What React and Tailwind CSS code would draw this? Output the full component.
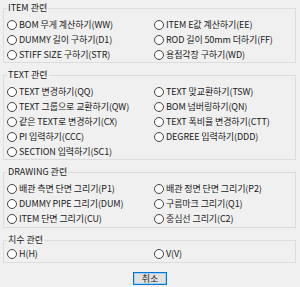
import React from "react";

const font = { fontFamily: '"Noto Sans CJK KR", "Noto Sans", sans-serif' };

function Radio({ label }) {
  return (
    <div className="flex items-center h-[15px] gap-[2px] whitespace-nowrap">
      <span className="w-[10px] h-[10px] rounded-full border border-[#444444] bg-white shrink-0" />
      <span className="leading-[15px] tracking-[-0.1px]">{label}</span>
    </div>
  );
}

function Group({ title, items, className = "", pt = "pt-[3px]", pb = "pb-0" }) {
  return (
    <fieldset className={`ml-[3px] w-[293px] border border-[#dcdcdc] ${className}`}>
      <legend className="ml-[3px] px-[1px] leading-[12px] text-[9px]">{title}</legend>
      <div className={`grid grid-cols-[147px_1fr] pl-[3px] ${pt} ${pb}`}>
        {items.map((it, i) => (
          <Radio key={i} label={it} />
        ))}
      </div>
    </fieldset>
  );
}

export default function App() {
  return (
    <div
      className="w-[300px] h-[287px] bg-[#f0f0f0] text-[9px] text-[#1a1a1a] overflow-hidden pt-[2px]"
      style={font}
    >
      <Group
        title="ITEM 관련"
        items={[
          "BOM 무게 계산하기(WW)",
          "ITEM E값 계산하기(EE)",
          "DUMMY 길이 구하기(D1)",
          "ROD 길이 50mm 더하기(FF)",
          "STIFF SIZE 구하기(STR)",
          "용접각장 구하기(WD)",
        ]}
      />
      <Group
        className="mt-[6px]"
        title="TEXT 관련"
        items={[
          " TEXT 변경하기(QQ)",
          " TEXT 맞교환하기(TSW)",
          " TEXT 그룹으로 교환하기(QW)",
          "BOM 넘버링하기(QN)",
          "같은 TEXT로 변경하기(CX)",
          " TEXT 폭비율 변경하기(CTT)",
          "PI 입력하기(CCC)",
          "DEGREE 입력하기(DDD)",
          "SECTION 입력하기(SC1)",
        ]}
      />
      <Group
        className="mt-[6px]"
        title="DRAWING 관련"
        pb="pb-[1px]"
        items={[
          "배관 측면 단면 그리기(P1)",
          "배관 정면 단면 그리기(P2)",
          "DUMMY PIPE 그리기(DUM)",
          "구름마크 그리기(Q1)",
          "ITEM 단면 그리기(CU)",
          "중심선 그리기(C2)",
        ]}
      />
      <Group
        className="mt-[6px]"
        title="치수 관련"
        pt="pt-0"
        pb="pb-[1px]"
        items={["H(H)", "V(V)"]}
      />
      <div className="flex justify-center mt-[9px]">
        <button className="w-[34px] h-[13px] border border-[#0078d7] bg-[#e1e1e1] text-[9px] leading-[11px] flex items-center justify-center">
          <span className="border border-[#a8cdf0] w-full h-full flex items-center justify-center">취소</span>
        </button>
      </div>
    </div>
  );
}
